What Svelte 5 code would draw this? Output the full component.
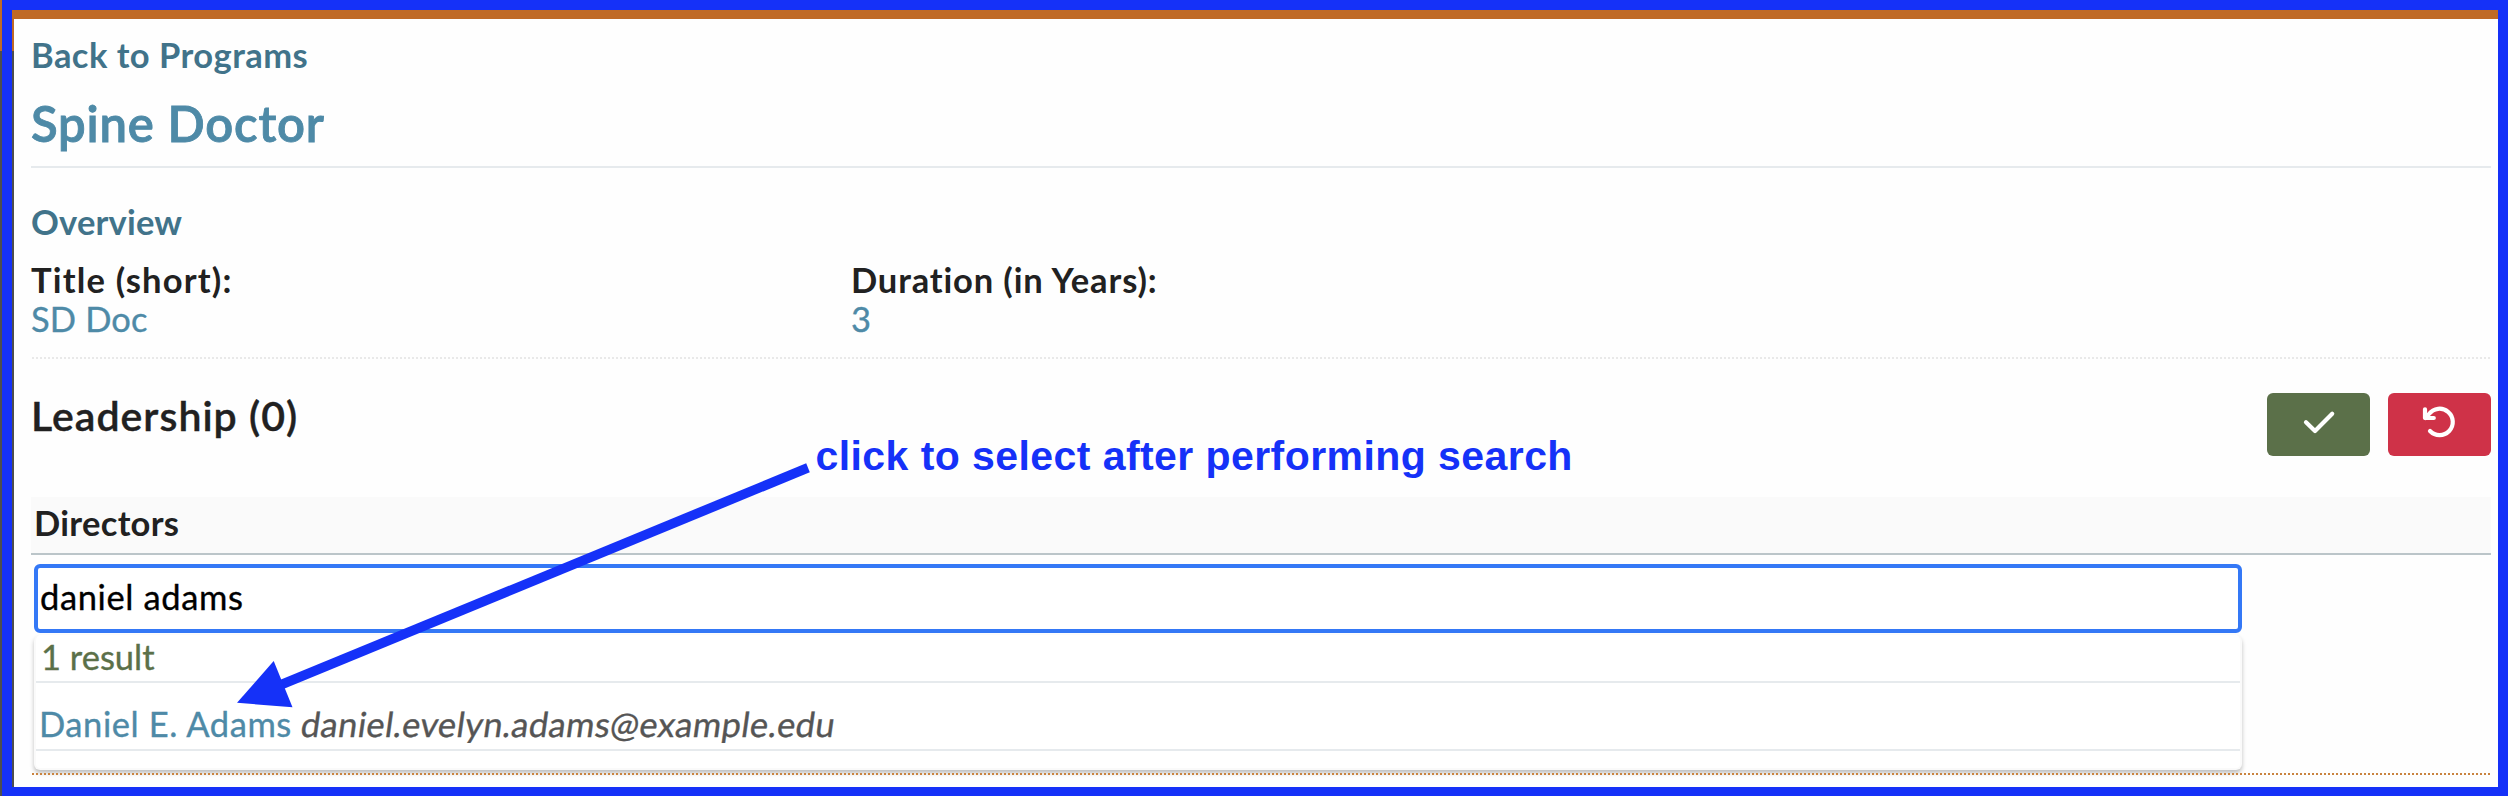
<script>
  let query = $state('daniel adams');
  const fields = [
    { label: 'Title (short):', value: 'SD Doc', labelSpacing: 1.19, valueSpacing: 0.13 },
    { label: 'Duration (in Years):', value: '3', labelSpacing: 0.86, valueSpacing: 0 }
  ];
  const results = [{ name: 'Daniel E. Adams', email: 'daniel.evelyn.adams@example.edu' }];
</script>

<div class="screen">
  <main>
    <a class="back" href="#programs">Back to Programs</a>
    <h1>Spine Doctor</h1>

    <section class="overview">
      <h2>Overview</h2>
      <div class="fields">
        {#each fields as f}
          <div class="field">
            <div class="label" style="letter-spacing: {f.labelSpacing}px">{f.label}</div>
            <div class="value" style="letter-spacing: {f.valueSpacing}px">{f.value}</div>
          </div>
        {/each}
      </div>
    </section>
    <div class="dots light"></div>

    <header class="leadership">
      <h3>Leadership (0)</h3>
      <div class="actions">
        <button class="save" aria-label="Save">
          <svg width="103" height="63" viewBox="0 0 103 63"><path d="M39 29.2 L48 38 L65.2 20.8" /></svg>
        </button>
        <button class="cancel" aria-label="Cancel">
          <svg width="103" height="63" viewBox="0 0 103 63">
            <path d="M42 38 A13.2 13.2 0 1 0 41 21 L37.6 25" />
            <path d="M37 16.3 V25 H45.8" />
          </svg>
        </button>
      </div>
    </header>

    <div class="band">Directors</div>
    <div class="search">
      <input bind:value={query} aria-label="Search directors" />
      <div class="results">
        <div class="count">1 result</div>
        {#each results as r}
          <div class="result"><span class="name">{r.name}</span><em>{r.email}</em></div>
        {/each}
      </div>
    </div>
    <div class="dots warm"></div>
  </main>

  <svg class="arrow" width="2508" height="796" viewBox="0 0 2508 796">
    <path d="M808 467.8 L281 684.8" stroke="#1531f8" stroke-width="9.6" />
    <path d="M237 702.8 L273.7 661 L292.5 707.2 Z" fill="#1531f8" />
  </svg>
  <div class="note">click to select after performing search</div>
  <div class="edge outer"></div>
  <div class="edge inner"></div>
  <div class="frame"></div>
</div>

<style>
  :global(body) { margin: 0; background: #fff; overflow: hidden; }
  * { box-sizing: border-box; }
  .screen {
    position: relative;
    width: 2508px;
    height: 796px;
    overflow: hidden;
    background: #fefefe;
    font: 400 34.5px/40px Lato, "Noto Sans", sans-serif;
    font-kerning: normal;
    color: #212121;
  }
  main {
    margin-top: 10px;
    border-top: 9px solid #c06a26;
    padding: 16px 17px 0 31px;
    display: flex;
    flex-direction: column;
  }
  .back { color: #41738a; font-weight: 700; letter-spacing: .46px; text-decoration: none; }
  h1, h2, h3 { margin: 0; }
  h1 {
    margin-top: 18px;
    padding-bottom: 13px;
    border-bottom: 2px solid #e6eaed;
    font-size: 49px;
    line-height: 60px;
    font-weight: 600;
    letter-spacing: .8px;
    color: #4e8aa7;
    -webkit-text-stroke: .9px currentColor;
  }
  h2 { margin-top: 34px; font-size: 34.5px; line-height: 40px; letter-spacing: .2px; color: #41738a; }
  .fields { display: grid; grid-template-columns: 820px 820px; margin-top: 18px; line-height: 39px; }
  .label { font-weight: 700; }
  .value { color: #4e8aa7; }
  .value, input, .count, .name, em { -webkit-text-stroke: .35px currentColor; }
  .dots { height: 2px; margin-left: 1px; }
  .light { margin-top: 19px; background: repeating-linear-gradient(90deg, #e9e9e9 0 2px, transparent 2px 4px); }
  .warm { margin-top: 3px; position: relative; background: repeating-linear-gradient(90deg, #c9833f 0 2px, transparent 2px 4px); }
  .leadership { display: flex; justify-content: space-between; margin-top: 34px; height: 63px; }
  h3 { margin-top: -2px; font-size: 41px; line-height: 50px; font-weight: 600; letter-spacing: 1.04px; -webkit-text-stroke: .4px currentColor; }
  .actions { display: flex; gap: 18px; }
  button { width: 103px; height: 63px; padding: 0; border: 0; border-radius: 6px; }
  button svg { display: block; fill: none; stroke: #fff; stroke-width: 4.2; stroke-linecap: round; stroke-linejoin: round; }
  .save { background: #5b7049; }
  .cancel { background: #cf3248; }
  .band {
    height: 58px;
    margin-top: 41px;
    padding-left: 3px;
    border-bottom: 2px solid #bbc5c9;
    background: #fafafa;
    line-height: 52px;
    font-weight: 700;
    letter-spacing: .3px;
  }
  .search { margin: 9px 0 0 3px; width: 2208px; }
  input {
    display: block;
    width: 100%;
    height: 69px;
    padding: 0 0 5px 2px;
    border: 4px solid #3478f6;
    border-radius: 6px;
    outline: 0;
    background: #fff;
    color: #000;
    font: inherit;
    letter-spacing: .62px;
  }
  .results {
    height: 135px;
    margin-top: 2px;
    border: 2px solid #fafafa;
    border-top: 0;
    border-radius: 6px;
    background: #fff;
    box-shadow: 0 3px 4px rgba(0, 0, 0, .25);
  }
  .count, .result { border-bottom: 2px solid #e6eaed; }
  .count { height: 48px; padding-left: 5px; line-height: 44px; color: #5b7049; letter-spacing: 0; }
  .result { display: flex; height: 68px; padding: 21px 0 0 3px; line-height: 40px; }
  .name { width: 262px; color: #4e8aa7; letter-spacing: .58px; }
  em { font-style: normal; transform: skewX(-8deg); color: #555; letter-spacing: .38px; }
  .arrow { position: absolute; left: 0; top: 0; }
  .note {
    position: absolute;
    left: 815.5px;
    top: 432px;
    white-space: nowrap;
    font: 700 41px/48px "Liberation Sans", Arial, sans-serif;
    letter-spacing: .43px;
    color: #1531f8;
  }
  .edge { position: absolute; top: 0; width: 2px; height: 796px; background: linear-gradient(#c06a26 51px, #4e4e4e 51px); }
  .outer { left: 0; }
  .inner { left: 12px; }
  .frame { position: absolute; inset: 0 0 0 2px; border: solid #1531f8; border-width: 10px 10px 9px; }
</style>
